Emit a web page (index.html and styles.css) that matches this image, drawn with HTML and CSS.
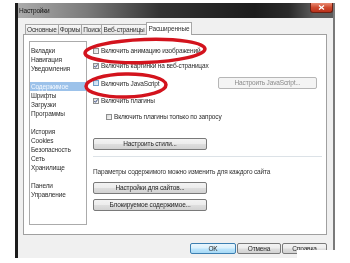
FILE: index.html
```html
<!DOCTYPE html>
<html lang="ru">
<head>
<meta charset="utf-8">
<title>Настройки</title>
<link rel="stylesheet" href="styles.css">
</head>
<body>
<div class="screen">
  <div class="window">
    <div class="titlebar">
      <span class="title">Настройки</span>
      <span class="close"><svg width="7" height="5" viewBox="0 0 7 5"><path d="M1 0.5 L6 4.5 M6 0.5 L1 4.5" stroke="#fff" stroke-width="1.3" fill="none"/></svg></span>
    </div>
    <div class="client">
      <div class="tabs">
        <div class="tab">Основные</div>
        <div class="tab">Формы</div>
        <div class="tab">Поиск</div>
        <div class="tab">Веб-страницы</div>
        <div class="tab active">Расширенные</div>
      </div>
      <div class="panel">
        <ul class="list">
          <li>Вкладки</li>
          <li>Навигация</li>
          <li>Уведомления</li>
          <li class="grp sel">Содержимое</li>
          <li>Шрифты</li>
          <li>Загрузки</li>
          <li>Программы</li>
          <li class="grp">История</li>
          <li>Cookies</li>
          <li>Безопасность</li>
          <li>Сеть</li>
          <li>Хранилище</li>
          <li class="grp">Панели</li>
          <li>Управление</li>
        </ul>
        <div class="content">
          <div class="row r1"><span class="cb"></span><span>Включить анимацию изображений</span></div>
          <div class="row r2"><span class="cb"><svg width="4" height="4" viewBox="0 0 4 4"><path d="M0.3 2 L1.5 3.3 L3.7 0.4" stroke="#3b4f86" stroke-width="1" fill="none"/></svg></span><span>Включить картинки на веб-страницах</span></div>
          <div class="row r3">
            <span class="cb hot"></span><span>Включить JavaScript</span>
            <span class="btn btn-js">Настроить JavaScript...</span>
          </div>
          <div class="row r4"><span class="cb"><svg width="4" height="4" viewBox="0 0 4 4"><path d="M0.3 2 L1.5 3.3 L3.7 0.4" stroke="#3b4f86" stroke-width="1" fill="none"/></svg></span><span>Включить плагины</span></div>
          <div class="row r5"><span class="cb"></span><span>Включить плагины только по запросу</span></div>
          <span class="btn btn-wide b-styles">Настроить стили...</span>
          <div class="sep"></div>
          <p class="note">Параметры содержимого можно изменить для каждого сайта</p>
          <span class="btn btn-wide b-sites">Настройки для сайтов...</span>
          <span class="btn btn-wide b-block">Блокируемое содержимое...</span>
        </div>
      </div>
      <div class="footer">
        <span class="btn btn-ok">OK</span>
        <span class="btn btn-cancel">Отмена</span>
        <span class="btn btn-help">Справка</span>
      </div>
    </div>
  </div>
  <svg class="marks" width="350" height="263" viewBox="0 0 350 263">
    <ellipse cx="145" cy="51" rx="60" ry="11.5" transform="rotate(-2 145 51)" fill="none" stroke="#d3131d" stroke-width="3.5"/>
    <ellipse cx="126" cy="85.5" rx="40" ry="11.5" transform="rotate(-1 126 85.5)" fill="none" stroke="#d3131d" stroke-width="3.5"/>
  </svg>
  <div class="glare"></div>
</div>
</body>
</html>
```

FILE: styles.css
```css
* { box-sizing: border-box; margin: 0; padding: 0; }
html, body { width: 350px; height: 263px; overflow: hidden; background: #fff; }
body {
  font-family: "Liberation Sans", Arial, sans-serif;
  font-size: 6.5px;
  letter-spacing: -0.15px;
  line-height: 9px;
  color: #2b2b2b;
}
.screen { position: relative; width: 350px; height: 263px; padding: 3px 0 0 15px; filter: blur(0.35px); }
.window {
  width: 320px; height: 255px;
  display: flex; flex-direction: column;
  background: #f0f0f0;
  border-left: 3px solid #1b1b1b;
  border-right: 2px solid #7a7a7a;
}
.titlebar {
  height: 15px; flex: none;
  display: flex; justify-content: space-between; align-items: flex-start;
  background: linear-gradient(to right, #ababab 0%, #7a7a7a 22%, #333 45%, #1c1c1c 75%, #2a2a2a 86%, #5c5c5c 94%);
}
.title { line-height: 15px; padding-left: 1px; color: #161616; }
.close {
  width: 23px; height: 10px;
  display: flex; align-items: center; justify-content: center;
  background: linear-gradient(#e88a72, #cf4a2e 50%, #b9301a);
  border: 1px solid #6b1f12; border-top: none;
  border-radius: 0 0 3px 3px;
}
.client { flex: 1; display: flex; flex-direction: column; padding: 4px 6px 0 5px; }
.tabs { display: flex; align-items: flex-end; height: 12px; padding-left: 2px; position: relative; z-index: 1; }
.tab {
  height: 10px; line-height: 9px; padding: 0 1px;
  border: 1px solid #a7a7a7; border-bottom: none;
  background: linear-gradient(#f7f7f7, #e3e3e3);
  margin-right: -1px; color: #333;
}
.tab.active { height: 13px; background: #fff; padding: 0 2px; line-height: 11px; margin-bottom: -1px; }
.panel {
  height: 201px; flex: none;
  background: #fff; border: 1px solid #a0a0a0;
  display: flex; padding: 6px 4px 0 5px;
}
.list { width: 58px; height: 184px; flex: none; border: 1px solid #ababab; list-style: none; padding: 4px 0 0; }
.list li { height: 9px; padding-left: 1px; color: #2e2e2e; }
.list li.grp { margin-top: 9px; }
.list li.sel { background: #9cc2ea; color: #f4f9ff; }
.content { flex: 1; margin-left: 6px; display: flex; flex-direction: column; align-items: flex-start; }
.row { display: flex; align-items: center; gap: 2px; height: 9px; width: 100%; }
.cb {
  width: 6px; height: 6px; flex: none;
  border: 1px solid #8e8f8f;
  background: linear-gradient(135deg, #d8d8d8, #fafafa);
  display: flex; align-items: center; justify-content: center;
}
.cb.hot { background: linear-gradient(135deg, #b9d6f0, #e6f1fb); border-color: #6f9fc8; }
.r1 { margin-top: 5px; }
.r2 { margin-top: 6px; }
.r3 { margin-top: 7px; height: 12px; }
.r4 { margin-top: 7px; }
.r5 { margin-top: 7px; padding-left: 13px; }
.btn {
  display: block; height: 12px;
  border: 1px solid #7a7a7a; border-radius: 2px;
  background: linear-gradient(#f3f3f3 0%, #ececec 48%, #dedede 52%, #d2d2d2 100%);
  line-height: 10px; text-align: center; color: #262626;
}
.btn-js { margin-left: auto; margin-right: 5px; width: 99px; border-color: #b6b6b6; background: #f4f4f4; color: #8b8b8b; }
.btn-wide { width: 114px; }
.b-styles { margin-top: 17px; }
.sep { align-self: stretch; height: 1px; background: #dce2e7; margin-top: 6px; }
.note { margin-top: 10px; color: #333; }
.b-sites { margin-top: 6px; }
.b-block { margin-top: 5px; }
.footer { display: flex; justify-content: flex-end; gap: 1px; padding-top: 8px; }
.footer .btn { height: 11px; line-height: 9px; }
.btn-ok { width: 46px; border-color: #3c7fb1; background: linear-gradient(#eaf6fd 0%, #d9f0fc 48%, #bee6fd 52%, #a7d9f5 100%); }
.btn-cancel { width: 44px; }
.btn-help { width: 45px; }
.marks { position: absolute; left: 0; top: 0; pointer-events: none; }
.glare { position: absolute; left: 297px; top: 250px; width: 53px; height: 13px; background: #fff; }
```
